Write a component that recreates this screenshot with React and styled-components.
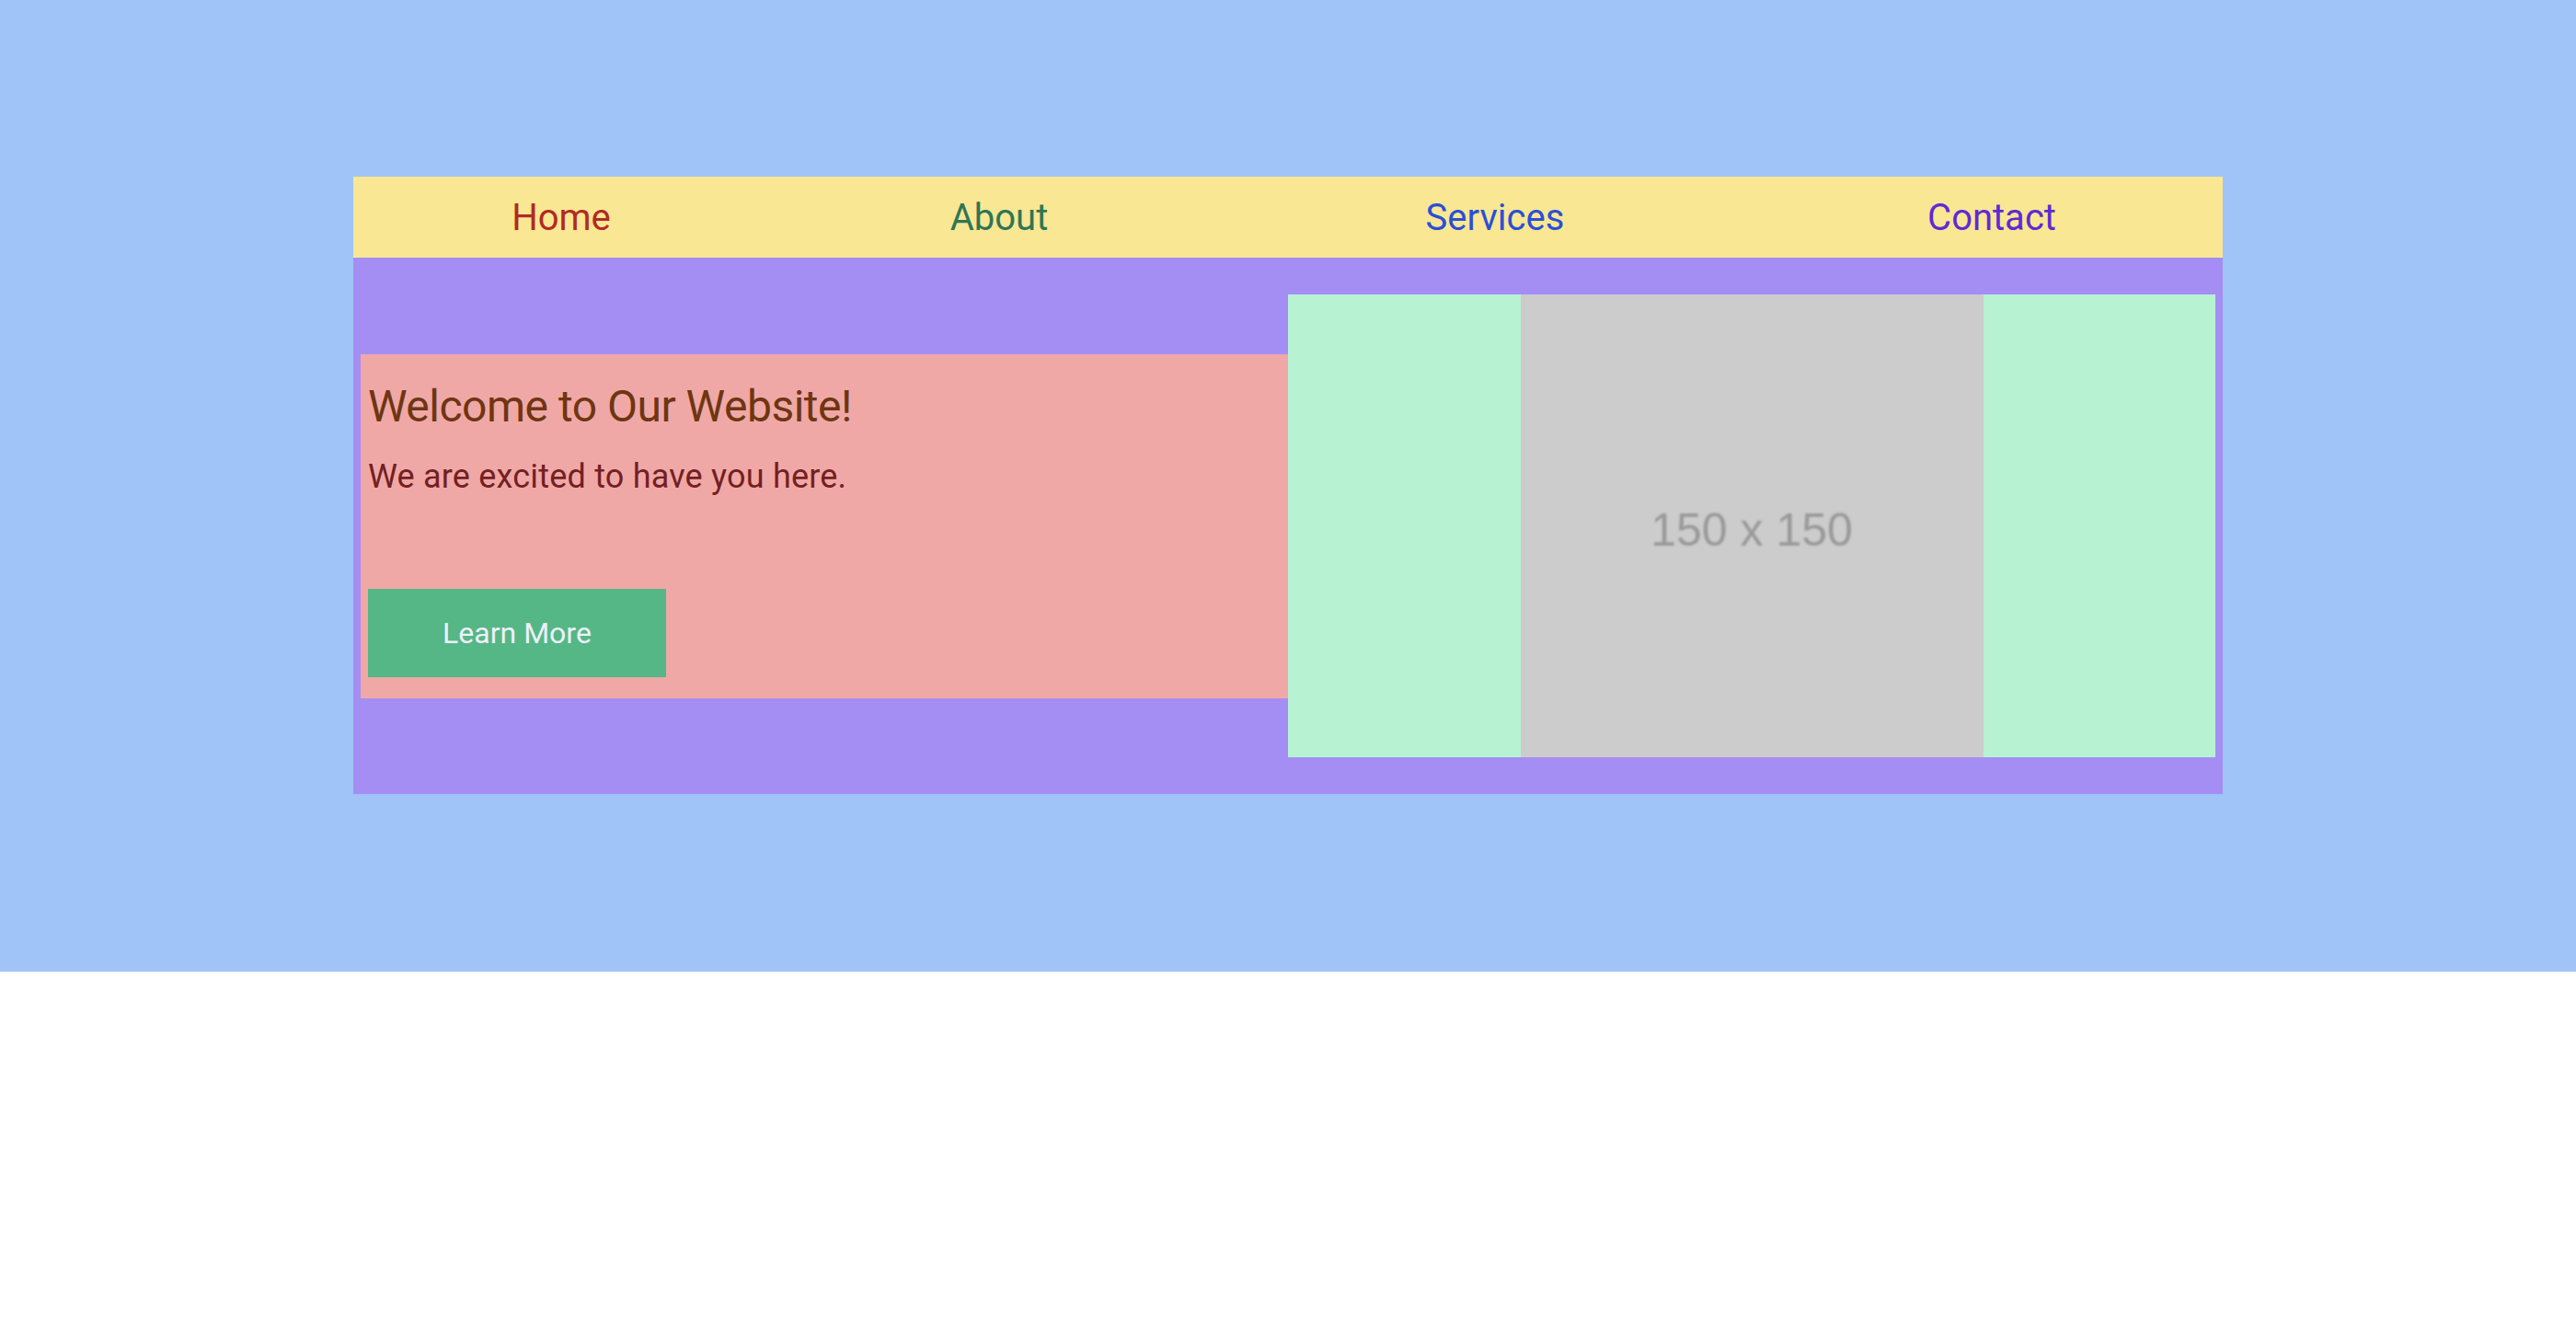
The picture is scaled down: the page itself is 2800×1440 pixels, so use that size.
import React from 'react'
import styled, { createGlobalStyle } from 'styled-components'

const GlobalStyle = createGlobalStyle`
  html, body {
    margin: 0;
    padding: 0;
    background: #ffffff;
    font-family: Roboto, "Liberation Sans", Arial, sans-serif;
  }
`

const Page = styled.div`
  background: #a0c4f8;
  padding: 192px 384px 193px;
`

const NavBar = styled.nav`
  display: grid;
  grid-template-columns: 452fr 500fr 578fr 502fr;
  align-items: center;
  height: 88px;
  background: #f9e793;
`

const NavLink = styled.a`
  text-align: center;
  font-size: 40px;
  color: ${(props) => props.color};
  text-decoration: none;
  cursor: pointer;
`

const Hero = styled.main`
  display: flex;
  align-items: center;
  padding: 40px 8px;
  background: #a48ef4;
`

const TextPanel = styled.section`
  flex: 1 1 50%;
  box-sizing: border-box;
  padding: 28px 8px 23px;
  background: #f0a8a7;
`

const Title = styled.h1`
  margin: 0 0 27px;
  font-size: 48px;
  font-weight: 400;
  letter-spacing: -0.5px;
  color: #6e3612;
`

const Lead = styled.p`
  margin: 0 0 101px;
  font-size: 36px;
  letter-spacing: 0.2px;
  color: #741f22;
`

const LearnButton = styled.button`
  display: block;
  width: 324px;
  height: 96px;
  border: none;
  background: #55b786;
  color: #eef0fb;
  font-family: inherit;
  font-size: 32px;
  cursor: pointer;
`

const MediaPanel = styled.section`
  flex: 1 1 50%;
  box-sizing: border-box;
  display: flex;
  justify-content: center;
  background: #b7f2d2;
`

const Placeholder = styled.div`
  display: flex;
  align-items: center;
  justify-content: center;
  width: 503px;
  height: 503px;
  background: #cccccc;
  span {
    font-family: "Liberation Sans", Arial, sans-serif;
    font-size: 50px;
    color: #999999;
    filter: blur(0.8px);
    padding-top: 8px;
  }
`

const links = [
  { label: 'Home', color: '#b22a24' },
  { label: 'About', color: '#2e7656' },
  { label: 'Services', color: '#2b4fd6' },
  { label: 'Contact', color: '#6129d6' },
]

export default function App() {
  return (
    <>
      <GlobalStyle />
      <Page>
        <NavBar>
          {links.map((link) => (
            <NavLink key={link.label} color={link.color}>
              {link.label}
            </NavLink>
          ))}
        </NavBar>
        <Hero>
          <TextPanel>
            <Title>Welcome to Our Website!</Title>
            <Lead>We are excited to have you here.</Lead>
            <LearnButton>Learn More</LearnButton>
          </TextPanel>
          <MediaPanel>
            <Placeholder>
              <span>150 x 150</span>
            </Placeholder>
          </MediaPanel>
        </Hero>
      </Page>
    </>
  )
}
